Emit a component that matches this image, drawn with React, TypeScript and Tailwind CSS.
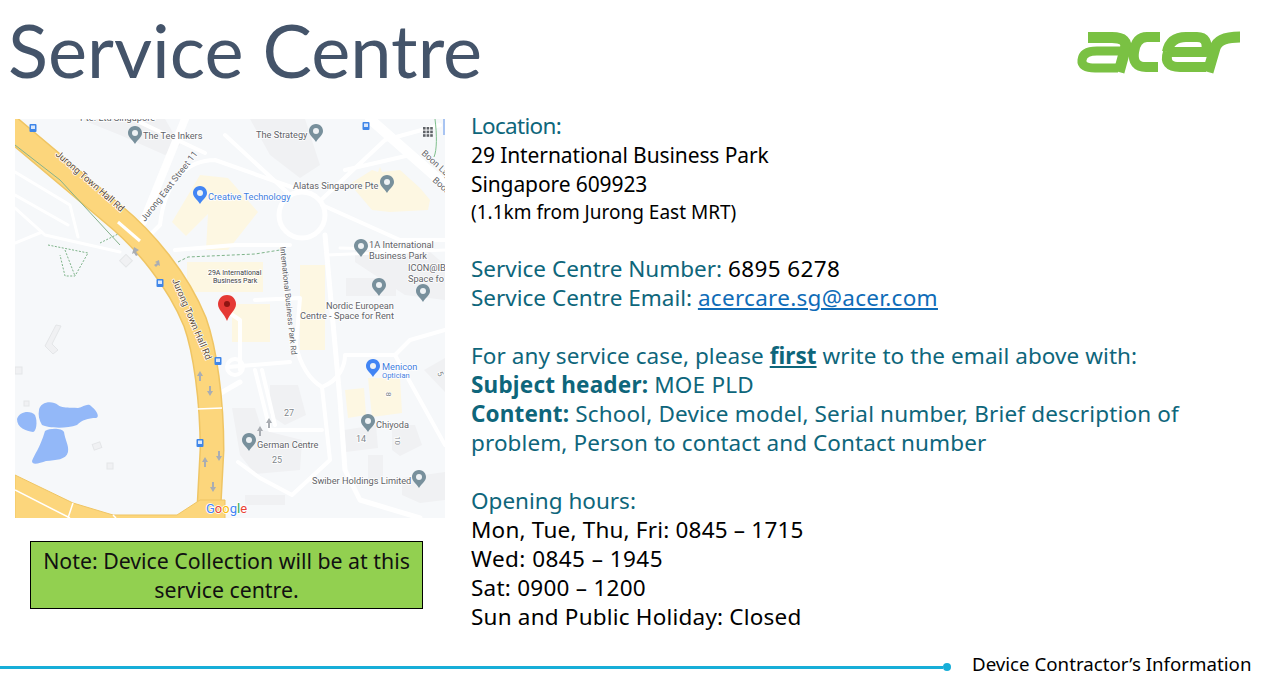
import React from 'react';

const teal = 'text-[#0e667b]';

function Pin({ x, y, color = '#78909c' }: { x: number; y: number; color?: string }) {
  return (
    <g transform={`translate(${x} ${y})`}>
      <path d="M0 -9 C-5 -9 -7 -5 -7 -2 C-7 2 -3 4 0 9 C3 4 7 2 7 -2 C7 -5 5 -9 0 -9 Z" fill={color} />
      <circle cx="0" cy="-2" r="3" fill="#eef2f5" />
    </g>
  );
}

function Bus({ x, y }: { x: number; y: number }) {
  return (
    <g transform={`translate(${x} ${y})`}>
      <rect x="-3.5" y="-4" width="7" height="8" rx="1" fill="#3f86e8" />
      <rect x="-2" y="-2.5" width="4" height="3.5" fill="#dbe8fb" />
    </g>
  );
}

function Label({ x, y, children, size = 9.2, fill = '#5f6368', rotate }: { x: number; y: number; children: React.ReactNode; size?: number; fill?: string; rotate?: number }) {
  return (
    <text
      x={x}
      y={y}
      fontSize={size}
      fill={fill}
      fontFamily="Roboto, sans-serif"
      stroke="#ffffff"
      strokeWidth="1.5"
      paintOrder="stroke"
      transform={rotate ? `rotate(${rotate} ${x} ${y})` : undefined}
    >
      {children}
    </text>
  );
}

const roadPath = 'M5 123 L113 214 C145 240 178 280 195 322 C205 350 212 400 212 450 L208 525';

function MapPicture() {
  return (
    <svg viewBox="15 119 430 399" className="block w-[430px] h-[399px]">
      <rect x="15" y="119" width="430" height="399" fill="#f6f8fa" />

      {/* buildings */}
      <g fill="#f0f1f3">
        <path d="M80 119 L165 119 L180 145 L165 155 L120 135 Z" />
        <path d="M250 119 L305 119 L320 165 L300 178 L270 155 Z" />
        <path d="M355 245 L395 255 L430 252 L445 265 L445 300 L405 295 L355 262 Z" />
        <rect x="346" y="278" width="50" height="18" />
        <path d="M270 385 L298 385 L306 415 L285 425 L270 415 Z" />
        <path d="M232 408 L255 408 L262 430 L302 440 L300 470 L255 474 L240 455 Z" />
        <path d="M344 430 L376 425 L378 448 L346 452 Z" />
        <path d="M392 425 L415 425 L422 445 L400 456 L392 450 Z" />
        <rect x="368" y="455" width="15" height="25" />
        <path d="M402 478 L445 472 L445 500 L420 503 L402 495 Z" />
        <path d="M424 370 L445 358 L445 392 Z" />
        <rect x="245" y="495" width="40" height="10" />
      </g>
      <g fill="#fdf7e2">
        <path d="M172 222 L200 175 L228 178 L258 212 L228 250 L206 250 L208 214 L186 236 Z" />
        <path d="M350 184 L372 170 L378 172 L380 167 L382 172 L400 170 L420 188 L430 200 L428 210 L390 212 L372 210 Z" />
        <rect x="187" y="262" width="76" height="30" />
        <rect x="232" y="304" width="38" height="38" />
        <rect x="300" y="265" width="25" height="85" />
        <path d="M368 378 L400 378 L402 413 L372 417 Z" />
        <path d="M345 390 L364 388 L366 415 L348 418 Z" />
      </g>

      {/* local roads */}
      <g fill="none" stroke="#ffffff" strokeWidth="4" strokeLinecap="round" strokeLinejoin="round">
        <path d="M15 172 L70 205 L78 237 M15 208 L45 235 L120 252 M42 232 L15 243 M15 195 L68 225" strokeWidth="3" />
        <path d="M160 225 L145 240 L120 205 M160 225 C165 178 190 160 215 160 M205 153 L135 120 M215 160 L300 190" strokeWidth="4" />
        <path d="M185 119 L143 222" strokeWidth="8" />
        <path d="M225 135 L290 195 M175 250 L235 245 L290 245" />
        <circle cx="302" cy="215" r="23" strokeWidth="5" />
        <path d="M321 200 L385 140 L440 125 M345 170 L410 155 M322 205 L400 240 L445 240" />
        <path d="M370 119 L445 185" strokeWidth="10" />
        <path d="M325 235 L340 400 L345 470 L360 500 L420 518" strokeWidth="5" />
        <path d="M327 255 L445 250 M340 248 L410 250" strokeWidth="3" />
        <path d="M255 300 L300 298 L296 345 C300 365 310 380 322 387 C340 380 345 365 345 355 L395 355 L445 445" />
        <path d="M240 370 L240 320 L225 310 M228 367 L290 362" />
        <circle cx="235" cy="367" r="8" strokeWidth="4" />
        <path d="M255 370 L270 430 L322 430 M262 370 L275 425" />
        <path d="M322 387 L330 460 L292 495 L260 478 L238 462" />
        <path d="M395 355 L410 340 L445 330" />
        <path d="M200 405 L240 382" strokeWidth="5" />
      </g>

      {/* main road */}
      <g fill="none" strokeLinecap="butt">
        <path d={roadPath} stroke="#efc564" strokeWidth="25" />
        <path d={roadPath} stroke="#fcd67c" strokeWidth="22" />
      </g>
      <path d="M15 475 L73 503 L113 515 L177 515 L200 500 L225 500 L225 520 L15 520 Z" fill="#fcd67c" stroke="#efc564" strokeWidth="1" />
      <path d="M15 490 L70 518 M73 503 L68 518 M113 515 L116 518" stroke="#ffffff" strokeWidth="1.5" fill="none" />
      <path d="M118 222 L140 241" stroke="#ffffff" strokeWidth="3" />
      <path d="M197 409 L222 408" stroke="#ffffff" strokeWidth="1.5" />

      {/* green paths */}
      <path d="M15 145 L60 180 L120 245" fill="none" stroke="#86b28c" strokeWidth="1" />
      <path d="M178 262 L188 257 L255 254 L280 250" fill="none" stroke="#7fb48a" strokeWidth="1" strokeDasharray="3 2" />
      <path d="M48 245 L88 253 L75 276 L65 276 L60 255 M65 250 L75 276 M100 243 L118 234" fill="none" stroke="#7fb48a" strokeWidth="1" strokeDasharray="2 1.5" />
      <path d="M435 119 C437 135 437 150 434 157" fill="none" stroke="#7fc08d" strokeWidth="1" />
      <path d="M444 119 L444 135" stroke="#a8c4f2" strokeWidth="2" />

      {/* water */}
      <g fill="#93b8f8">
        <path d="M17 419 C19 411 31 410 35 415 C38 422 36 432 33 432 C26 431 17 428 17 419 Z" />
        <path d="M39 410 C40 402 52 400 58 405 C63 409 72 407 78 408 C84 407 88 402 92 407 C97 411 100 417 96 418 C88 418 82 420 77 425 C66 429 48 428 42 425 C39 420 38 415 39 410 Z" />
        <path d="M45 431 C50 428 62 428 64 432 C65 440 69 445 68 452 C66 460 56 460 46 461 C40 463 32 466 32 461 C34 455 40 448 45 431 Z" />
      </g>

      {/* small outlines */}
      <g fill="#f0f1f3" stroke="#e4e6e8" strokeWidth="1">
        <path d="M61 326 L52 344 L58 350 L53 354 L45 346 L56 325 Z" />
        <rect x="15" y="367" width="7" height="7" />
        <rect x="24" y="401" width="5" height="5" />
        <rect x="93" y="443" width="8" height="6" transform="rotate(-20 97 446)" />
        <rect x="107" y="463" width="6" height="6" />
        <rect x="122" y="256" width="9" height="9" transform="rotate(45 126 260)" />
      </g>

      {/* road arrows */}
      <g fill="#a9adb3">
        <path d="M200 371 l3 5 h-2 v5 h-2 v-5 h-2 Z" />
        <path d="M210 396 l3 -5 h-2 v-5 h-2 v5 h-2 Z" />
        <path d="M205 457 l3 5 h-2 v5 h-2 v-5 h-2 Z" />
        <path d="M219 461 l3 -5 h-2 v-5 h-2 v5 h-2 Z" />
        <path d="M213 492 l3 -5 h-2 v-5 h-2 v5 h-2 Z" />
        <path d="M134 247 l5 3 -3 2 2 3 -2 1 -2 -3 -2 1 Z" />
        <path d="M159 260 l1 6 -2 -1 -2 2 -2 -2 3 -2 -2 -1 Z" />
        <path d="M269 418 l3 5 h-2 v5 h-2 v-5 h-2 Z" />
        <path d="M260 426 l3 5 h-2 v5 h-2 v-5 h-2 Z" />
      </g>

      {/* pins */}
      <Pin x={135} y={135} />
      <Pin x={316} y={133} />
      <Pin x={387} y={184} />
      <Pin x={361} y={248} />
      <Pin x={423} y={293} />
      <Pin x={379} y={287} />
      <Pin x={368} y={423} />
      <Pin x={249} y={442} />
      <Pin x={419} y={479} />
      <Pin x={200} y={195} color="#4285f4" />
      <Pin x={373} y={368} color="#4285f4" />
      <path d="M227 295 C221 295 218 300 218 304 C218 310 224 313 227 321 C230 313 236 310 236 304 C236 300 233 295 227 295 Z" fill="#e53935" />
      <circle cx="227" cy="304" r="3" fill="#8e1512" />

      <Bus x={33} y={128} />
      <Bus x={160} y={283} />
      <Bus x={366} y={126} />
      <Bus x={218} y={361} />
      <Bus x={200} y={443} />

      {/* apps grid */}
      <g fill="#5f6368">
        {[0, 1, 2].flatMap((r) => [0, 1, 2].map((c) => (
          <rect key={`${r}${c}`} x={423 + c * 3.6} y={127 + r * 3.6} width="2.6" height="2.6" />
        )))}
      </g>

      {/* labels */}
      <Label x={80} y={121}>Pte. Ltd Singapore</Label>
      <Label x={143} y={139}>The Tee Inkers</Label>
      <Label x={256} y={138}>The Strategy</Label>
      <Label x={293} y={189}>Alatas Singapore Pte</Label>
      <Label x={208} y={200} fill="#3f7ee0">Creative Technology</Label>
      <Label x={369} y={248}>1A International</Label>
      <Label x={369} y={259}>Business Park</Label>
      <Label x={408} y={271}>ICON@IB</Label>
      <Label x={408} y={282}>Space fo</Label>
      <Label x={326} y={309}>Nordic European</Label>
      <Label x={300} y={319}>Centre - Space for Rent</Label>
      <Label x={382} y={370} fill="#3f7ee0">Menicon</Label>
      <Label x={382} y={378} size={7.5} fill="#3f7ee0">Optician</Label>
      <Label x={376} y={428}>Chiyoda</Label>
      <Label x={257} y={448}>German Centre</Label>
      <Label x={312} y={484}>Swiber Holdings Limited</Label>
      <Label x={208} y={275} size={7} fill="#3c3c3c">29A International</Label>
      <Label x={213} y={283} size={7} fill="#3c3c3c">Business Park</Label>
      <Label x={284} y={416} size={9} fill="#80868b">27</Label>
      <Label x={272} y={463} size={9} fill="#80868b">25</Label>
      <Label x={356} y={442} size={9} fill="#80868b">14</Label>
      <Label x={395} y={436} size={8} fill="#80868b" rotate={90}>10</Label>
      <Label x={386} y={392} size={8} fill="#80868b" rotate={90}>8</Label>
      <Label x={437} y={373} size={8} fill="#80868b" rotate={65}>5</Label>
      <Label x={55} y={155} size={9.5} fill="#5d4a33" rotate={41}>Jurong Town Hall Rd</Label>
      <Label x={172} y={280} size={9.5} fill="#5d4a33" rotate={67}>Jurong Town Hall Rd</Label>
      <Label x={145} y={222} size={9} rotate={-52}>Jurong East Street 11</Label>
      <Label x={280} y={247} size={8} rotate={84}>International Business Park Rd</Label>
      <Label x={421} y={154} size={9} rotate={42}>Boon Lay</Label>
      <Label x={432} y={181} size={9} rotate={42}>Boon</Label>

      {/* map brand */}
      <text x="206" y="513" fontSize="13" fontFamily="Roboto, sans-serif" stroke="#ffffff" strokeWidth="1.5" paintOrder="stroke">
        <tspan fill="#4285f4">G</tspan>
        <tspan fill="#ea4335">o</tspan>
        <tspan fill="#fbbc05">o</tspan>
        <tspan fill="#4285f4">g</tspan>
        <tspan fill="#34a853">l</tspan>
        <tspan fill="#ea4335">e</tspan>
      </text>
    </svg>
  );
}

function AcerLogo() {
  return (
    <svg viewBox="1070 25 175 53" className="block w-[175px] h-[53px]">
      <g fill="none" stroke="#7ac143" strokeLinejoin="round">
        <path d="M1088 37.5 L1112 37.5 Q1129 37.5 1125 50 L1119 72" strokeWidth="11" />
        <path d="M1122 51 L1097 51 Q1083 51 1082 60 Q1081 68 1095 68 L1118 68" strokeWidth="9" />
        <path d="M1160 37 L1147 37 Q1136 37 1134 52 Q1132 67 1146 67 L1158 67" strokeWidth="10" />
        <path d="M1167 52 Q1170 37 1186 37 L1197 37 Q1209 37 1206 52 L1168 52" strokeWidth="10" />
        <path d="M1168 52 Q1163 67 1180 67 L1206 67" strokeWidth="10" />
        <path d="M1208 72 L1215 48 Q1218 37 1240 37" strokeWidth="11" />
      </g>
    </svg>
  );
}

export default function App() {
  return (
    <div className="w-[1266px] h-[681px] bg-white overflow-hidden flex flex-col font-['Noto_Sans',sans-serif] text-black">
      {/* Header */}
      <div className="h-[119px] shrink-0 flex justify-between pl-[8px] pr-[21px]">
        <h1 className="text-[#44546a] text-[74px] leading-[100px] font-normal font-['Lato',sans-serif]">Service Centre</h1>
        <div className="pt-[25px]">
          <AcerLogo />
        </div>
      </div>

      {/* Body */}
      <div className="flex-1 flex min-h-0 pl-[15px]">
        <div className="w-[430px] shrink-0">
          <MapPicture />
          <div className="mt-[23px] ml-[15px] w-[393px] h-[68px] bg-[#92d050] border border-black flex items-center justify-center text-center text-[21.3px] leading-[29px] text-[#111]">
            Note: Device Collection will be at this
            <br />
            service centre.
          </div>
        </div>

        <div className="ml-[26px] -mt-[8px] text-[22.5px] leading-[29px]">
          <p className={`tracking-[-0.7px] ${teal}`}>Location:</p>
          <p className="text-[21px] tracking-[-0.1px] pt-[1px] -mb-[1px]">29 International Business Park</p>
          <p className="text-[21px] tracking-[-0.1px] pt-[1px] -mb-[1px]">Singapore 609923</p>
          <p className="text-[19px]">(1.1km from Jurong East MRT)</p>
          <p className={`mt-[27px] ${teal}`}>
            Service Centre Number: <span className="text-black tracking-[0.4px]">6895 6278</span>
          </p>
          <p className={teal}>
            Service Centre Email: <span className="text-[#0f6cb8] underline tracking-[0.3px]">acercare.sg@acer.com</span>
          </p>
          <p className={`mt-[29px] tracking-[0.07px] ${teal}`}>
            For any service case, please <b className="underline">first</b> write to the email above with:
          </p>
          <p className={`tracking-[0.2px] ${teal}`}>
            <b>Subject header:</b> MOE PLD
          </p>
          <p className={`tracking-[0.15px] ${teal}`}>
            <b>Content:</b> School, Device model, Serial number, Brief description of
          </p>
          <p className={`tracking-[0.1px] ${teal}`}>problem, Person to contact and Contact number</p>
          <p className={`mt-[29px] ${teal}`}>Opening hours:</p>
          <p className="tracking-[0.2px]">Mon, Tue, Thu, Fri: 0845 – 1715</p>
          <p className="tracking-[0.45px]">Wed: 0845 – 1945</p>
          <p className="tracking-[0.25px]">Sat: 0900 – 1200</p>
          <p className="tracking-[0.2px]">Sun and Public Holiday: Closed</p>
        </div>
      </div>

      {/* Footer */}
      <div className="h-[36px] shrink-0 flex items-start">
        <div className="w-[951px] h-[8px] mt-[18px] shrink-0 flex items-center">
          <div className="flex-1 h-[3px] bg-[#17aed8]" />
          <div className="w-[8px] h-[8px] rounded-full bg-[#17aed8]" />
        </div>
        <div className="ml-[21px] pt-[6px] text-[18.7px] leading-[26px] whitespace-nowrap">Device Contractor’s Information</div>
      </div>
    </div>
  );
}
